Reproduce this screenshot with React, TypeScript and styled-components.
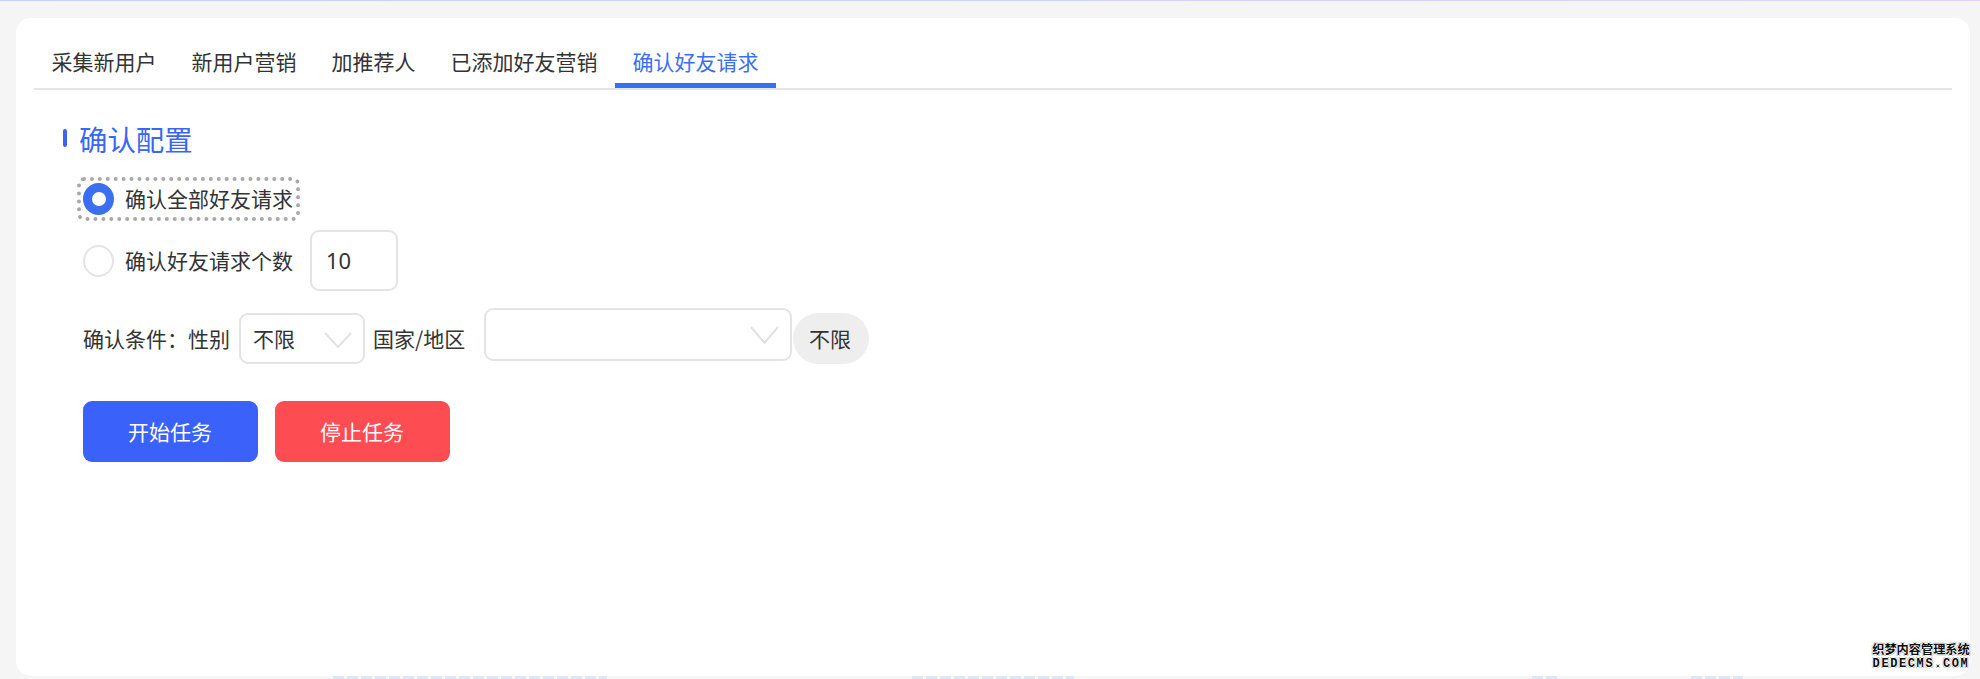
import React from "react";
import styled, { createGlobalStyle } from "styled-components";

const Global = createGlobalStyle`
  html, body { margin: 0; padding: 0; background: #f5f5f5; }
  body { font-family: "Noto Sans CJK SC", "Noto Sans", sans-serif; overflow: hidden; }
  * { box-sizing: border-box; }
`;

const Page = styled.div`
  width: 1980px;
  height: 679px;
  display: flex;
  flex-direction: column;
  background: #f5f5f5;
  position: relative;
  overflow: hidden;
`;
const TopStrip = styled.div`
  height: 1px;
  background: linear-gradient(90deg, #c6d2fd, #dfd3fb);
`;
const Card = styled.main`
  width: 1954px;
  height: 658px;
  margin: 17px 0 0 16px;
  padding: 20px 18px 0;
  background: #fff;
  border-radius: 15px;
`;
const Tabs = styled.nav`
  display: flex;
  height: 52px;
  border-bottom: 2px solid #e4e4e4;
`;
const Tab = styled.div<{ $active?: boolean }>`
  height: 50px;
  padding: 0 17.5px;
  line-height: 46px;
  font-size: 21px;
  color: ${(p) => (p.$active ? "#3a70f0" : "#333")};
  border-bottom: 5px solid ${(p) => (p.$active ? "#3370f5" : "transparent")};
  white-space: nowrap;
`;
const Content = styled.section`
  padding: 30px 0 0 29px;
`;
const Heading = styled.div`
  display: flex;
  align-items: center;
  gap: 12px;
  height: 40px;
`;
const HeadingBar = styled.span`
  width: 4px;
  height: 18px;
  margin-bottom: 5px;
  border-radius: 2px;
  background: #3a62f5;
`;
const HeadingText = styled.h2`
  margin: 0 0 3px;
  font-size: 28.4px;
  font-weight: 400;
  line-height: 37px;
  color: #3a66f5;
`;
const Options = styled.div`
  margin: 17px 0 0 14px;
`;
const OptionRow = styled.div<{ $tall?: boolean }>`
  display: flex;
  align-items: center;
  margin-top: ${(p) => (p.$tall ? "9px" : "0")};
`;
const Option = styled.label<{ $focused?: boolean }>`
  display: inline-flex;
  align-items: center;
  gap: 11px;
  height: 44px;
  padding: 0 3px 0 2px;
  font-size: 21px;
  color: #333;
  border: 4px ${(p) => (p.$focused ? "dotted #a8a8a8" : "solid transparent")};
  border-radius: 7px;
  white-space: nowrap;
`;
const OptionText = styled.span`
  margin-top: -2px;
`;
const Radio = styled.span<{ $checked?: boolean }>`
  flex: none;
  display: flex;
  align-items: center;
  justify-content: center;
  width: 31px;
  height: 32px;
  border-radius: 50%;
  background: ${(p) => (p.$checked ? "#3a70f0" : "#fff")};
  border: ${(p) => (p.$checked ? "none" : "2px solid #e4e4e4")};
`;
const RadioDot = styled.span`
  width: 14px;
  height: 14px;
  border-radius: 50%;
  background: #fff;
`;
const CountInput = styled.input`
  width: 88px;
  height: 61px;
  margin-left: 10px;
  padding: 0 0 2px 14px;
  border: 2px solid #e4e4e4;
  border-radius: 9px;
  outline: none;
  font: 400 22px "Noto Sans", sans-serif;
  color: #333;
  background: #fff;
`;
const ConditionRow = styled.div`
  display: flex;
  align-items: flex-start;
  margin: 17px 0 0 6px;
`;
const FieldLabel = styled.span<{ $ml: number; $w: number }>`
  flex: none;
  width: ${(p) => p.$w}px;
  margin: 5px 0 0 ${(p) => p.$ml}px;
  height: 51px;
  line-height: 51px;
  font-size: 21px;
  color: #333;
  white-space: nowrap;
`;
const Select = styled.div<{ $w: number; $h: number; $mt: number; $ml: number; $pad: number }>`
  flex: none;
  width: ${(p) => p.$w}px;
  height: ${(p) => p.$h}px;
  margin: ${(p) => p.$mt}px 0 0 ${(p) => p.$ml}px;
  padding: 0 ${(p) => p.$pad}px 0 12px;
  border: 2px solid #e4e4e4;
  border-radius: 9px;
  background: #fff;
  font-size: 21px;
  line-height: 47px;
  color: #333;
  display: flex;
  justify-content: space-between;
`;
const Chevron = styled.svg<{ $top: number }>`
  flex: none;
  margin-top: ${(p) => p.$top}px;
`;
const Pill = styled.span`
  flex: none;
  width: 76px;
  height: 51px;
  margin: 5px 0 0 1px;
  padding-right: 2px;
  border-radius: 26px;
  background: #eee;
  text-align: center;
  line-height: 50px;
  font-size: 21px;
  color: #333;
`;
const Actions = styled.div`
  display: flex;
  gap: 17px;
  margin: 37px 0 0 6px;
`;
const ActionButton = styled.button<{ $bg: string }>`
  width: 175px;
  height: 61px;
  padding: 0 1px 2px 0;
  border: none;
  border-radius: 9px;
  background: ${(p) => p.$bg};
  color: #fff;
  font-family: inherit;
  font-size: 21px;
`;
const BottomStrip = styled.div`
  display: flex;
  height: 3px;
`;
const Ghost = styled.span<{ $ml: number; $w: number }>`
  flex: none;
  margin-left: ${(p) => p.$ml}px;
  width: ${(p) => p.$w}px;
  background: repeating-linear-gradient(90deg, #dfe6f8 0 11px, #f5f5f5 11px 14px);
`;
const Watermark = styled.div`
  position: absolute;
  left: 1870px;
  top: 644px;
  width: 102px;
  text-align: center;
  color: #0c0c0c;
  font-weight: 700;
  text-shadow: 1px 0 0 #fff, -1px 0 0 #fff, 0 1px 0 #fff, 0 -1px 0 #fff, 1px 1px 0 #aaa, -1px -1px 0 #aaa, 1px -1px 0 #aaa, -1px 1px 0 #aaa;
`;
const WatermarkCn = styled.div`
  font-family: "Liberation Sans", "Noto Sans CJK SC", sans-serif;
  font-size: 12.2px;
  line-height: 13px;
  white-space: nowrap;
`;
const WatermarkEn = styled.div`
  font-family: "Liberation Mono", monospace;
  font-size: 12px;
  line-height: 14px;
  letter-spacing: 1.6px;
  white-space: nowrap;
`;

const Caret = ({ w, h, top }: { w: number; h: number; top: number }) => (
  <Chevron $top={top} width={w} height={h} viewBox={`0 0 ${w} ${h}`} fill="none">
    <path d={`M1 1 L${w / 2} ${h - 1} L${w - 1} 1`} stroke="#e2e2e2" strokeWidth="2" />
  </Chevron>
);

export default function App() {
  return (
    <Page>
      <Global />
      <TopStrip />
      <Card>
        <Tabs>
          <Tab>采集新用户</Tab>
          <Tab>新用户营销</Tab>
          <Tab>加推荐人</Tab>
          <Tab>已添加好友营销</Tab>
          <Tab $active>确认好友请求</Tab>
        </Tabs>
        <Content>
          <Heading>
            <HeadingBar />
            <HeadingText>确认配置</HeadingText>
          </Heading>
          <Options>
            <OptionRow>
              <Option $focused>
                <Radio $checked>
                  <RadioDot />
                </Radio>
                <OptionText>确认全部好友请求</OptionText>
              </Option>
            </OptionRow>
            <OptionRow $tall>
              <Option>
                <Radio />
                <OptionText>确认好友请求个数</OptionText>
              </Option>
              <CountInput defaultValue="10" />
            </OptionRow>
            <ConditionRow>
              <FieldLabel $ml={0} $w={147}>确认条件：性别</FieldLabel>
              <Select $w={126} $h={51} $mt={5} $ml={9} $pad={11}>
                不限
                <Caret w={28} h={16} top={17} />
              </Select>
              <FieldLabel $ml={8} $w={111}>国家/地区</FieldLabel>
              <Select $w={308} $h={53} $mt={0} $ml={0} $pad={11}>
                <span />
                <Caret w={29} h={18} top={16} />
              </Select>
              <Pill>不限</Pill>
            </ConditionRow>
            <Actions>
              <ActionButton $bg="#3a62fb">开始任务</ActionButton>
              <ActionButton $bg="#fe4d52">停止任务</ActionButton>
            </Actions>
          </Options>
        </Content>
      </Card>
      <BottomStrip>
        <Ghost $ml={333} $w={274} />
        <Ghost $ml={305} $w={162} />
        <Ghost $ml={458} $w={25} />
        <Ghost $ml={134} $w={52} />
      </BottomStrip>
      <Watermark>
        <WatermarkCn>织梦内容管理系统</WatermarkCn>
        <WatermarkEn>DEDECMS.COM</WatermarkEn>
      </Watermark>
    </Page>
  );
}
